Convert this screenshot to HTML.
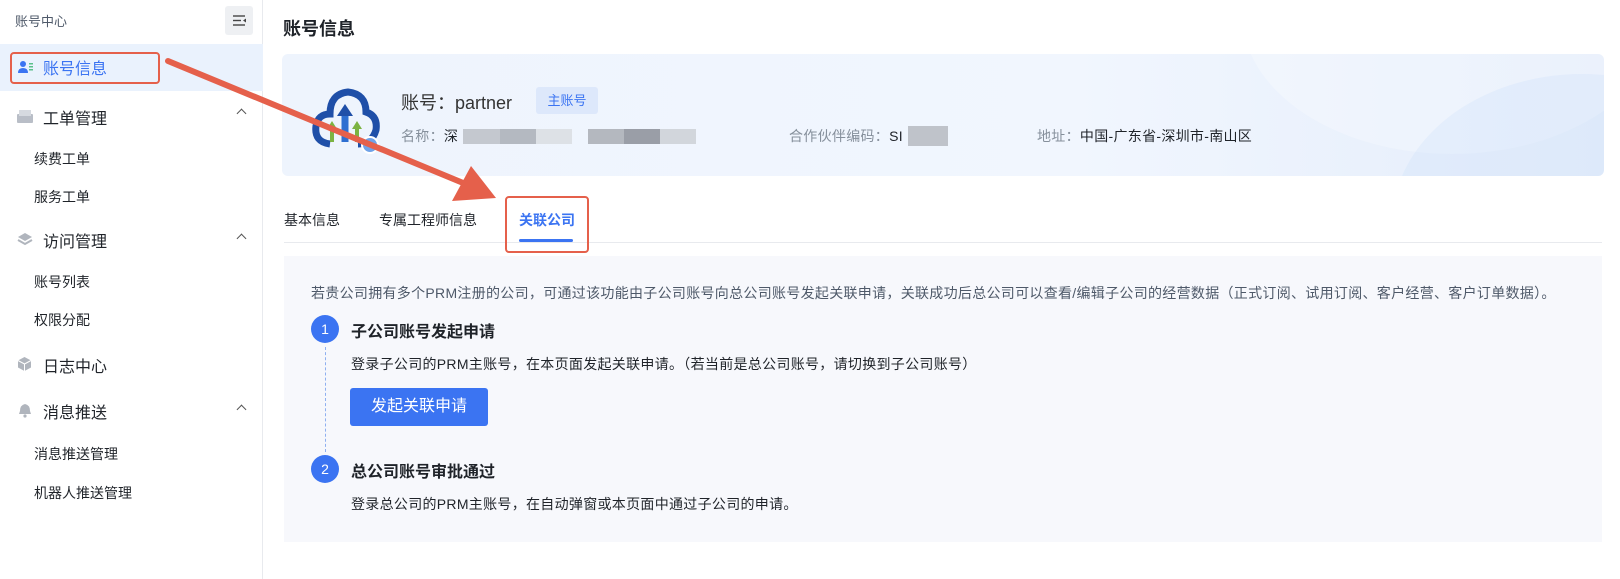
<!DOCTYPE html>
<html><head><meta charset="utf-8"><style>
*{margin:0;padding:0;box-sizing:border-box}
body{width:1620px;height:579px;background:#fff;font-family:"Liberation Sans","Noto Sans CJK SC",sans-serif;color:#1f2329;position:relative;overflow:hidden}
.a{position:absolute;white-space:nowrap}
.side{position:absolute;left:0;top:0;width:263px;height:579px;border-right:1px solid #e8eaee;background:#fff}
.g{font-size:16px;color:#1f2329}
.s{font-size:14px;color:#1f2329}
.ls{letter-spacing:0.3px}
.chev{position:absolute;left:238px;width:7px;height:7px;border-left:1.4px solid #555;border-top:1.4px solid #555;transform:rotate(45deg)}
</style></head><body>
<div class="side">
  <div class="a" style="left:15px;top:11px;font-size:13px;color:#4e5969">账号中心</div>
  <div class="a" style="left:225px;top:6px;width:28px;height:29px;background:#eef0f3;border-radius:3px">
    <svg width="28" height="29" viewBox="0 0 28 29"><g stroke="#444" stroke-width="1.4"><line x1="8" y1="10" x2="20" y2="10"/><line x1="8" y1="14.5" x2="16" y2="14.5"/><line x1="8" y1="19" x2="20" y2="19"/></g><path d="M21 12.5 L18 14.5 L21 16.5Z" fill="#444"/></svg>
  </div>
  <div class="a" style="left:0;top:44px;width:263px;height:47px;background:#eaf2fd"></div>
  <div class="a" style="left:10px;top:52px;width:150px;height:32px;border:2px solid #e5604b;border-radius:4px"></div>
  <svg class="a" style="left:18px;top:60px" width="16" height="14" viewBox="0 0 16 14"><circle cx="5" cy="4" r="3" fill="#3b74f2"/><path d="M0 13 Q0 8 5 8 Q10 8 10 13Z" fill="#3b74f2"/><rect x="11" y="3" width="4" height="1.5" fill="#5bc08a"/><rect x="11" y="6" width="4" height="1.5" fill="#5bc08a"/><rect x="11" y="9" width="4" height="1.5" fill="#5bc08a"/></svg>
  <div class="a g" style="left:43px;top:55px;color:#3b74f2">账号信息</div>
  <svg class="a" style="left:17px;top:109px" width="16" height="14"><rect x="0" y="5" width="16" height="9" rx="1" fill="#b9bec7"/><rect x="2" y="1" width="12" height="6" fill="#d6dae0"/></svg>
  <div class="a g" style="left:43px;top:105px">工单管理</div><div class="chev" style="top:110px"></div>
  <div class="a s" style="left:34px;top:149px">续费工单</div>
  <div class="a s" style="left:34px;top:187px">服务工单</div>
  <svg class="a" style="left:17px;top:232px" width="16" height="15"><path d="M8 1 L15 5 L8 9 L1 5Z" fill="#b0b5bd"/><path d="M1 8 L8 12 L15 8" stroke="#b0b5bd" stroke-width="2" fill="none"/></svg>
  <div class="a g" style="left:43px;top:228px">访问管理</div><div class="chev" style="top:235px"></div>
  <div class="a s" style="left:34px;top:272px">账号列表</div>
  <div class="a s" style="left:34px;top:310px">权限分配</div>
  <svg class="a" style="left:17px;top:356px" width="15" height="16"><path d="M7.5 1 L14 4.5 L14 11.5 L7.5 15 L1 11.5 L1 4.5Z" fill="#b0b5bd"/><path d="M1 4.5 L7.5 8 L14 4.5 M7.5 8 V15" stroke="#fff" stroke-width="1" fill="none"/></svg>
  <div class="a g" style="left:43px;top:353px">日志中心</div>
  <svg class="a" style="left:18px;top:403px" width="14" height="15"><path d="M7 1 Q12 2 12 8 L13 11 L1 11 L2 8 Q2 2 7 1Z" fill="#b0b5bd"/><circle cx="7" cy="13" r="1.6" fill="#b0b5bd"/></svg>
  <div class="a g" style="left:43px;top:399px">消息推送</div><div class="chev" style="top:406px"></div>
  <div class="a s" style="left:34px;top:444px">消息推送管理</div>
  <div class="a s" style="left:34px;top:483px">机器人推送管理</div>
</div>

<div class="a" style="left:283px;top:15px;font-size:18px;font-weight:bold">账号信息</div>
<div class="a" style="left:282px;top:54px;width:1322px;height:122px;border-radius:6px;background:linear-gradient(90deg,#eef4fd,#f1f6fe 60%,#e4edfb);overflow:hidden">
  <div class="a" style="left:960px;top:-180px;width:420px;height:280px;border-radius:50%;background:rgba(255,255,255,.25)"></div>
  <div class="a" style="left:1110px;top:20px;width:380px;height:300px;border-radius:50%;background:rgba(210,225,248,.35)"></div>
</div>
<svg class="a" style="left:310px;top:84px" width="72" height="72" viewBox="0 0 72 72">
  <path d="M20 60 Q4 58 6 42 Q8 30 20 30 Q20 10 38 8 Q56 10 56 28 Q68 32 66 46 Q62 60 48 60" fill="none" stroke="#1f4fa8" stroke-width="7"/>
  <path d="M35 58 V30" stroke="#2e6fd1" stroke-width="7"/><path d="M27 32 L35 20 L43 32Z" fill="#1f4fa8"/>
  <path d="M22 58 V44" stroke="#7cb342" stroke-width="4"/><path d="M17 45 L22 37 L27 45Z" fill="#7cb342"/>
  <path d="M47 58 V44" stroke="#7cb342" stroke-width="4"/><path d="M42 45 L47 37 L52 45Z" fill="#7cb342"/>
  <circle cx="60" cy="61" r="8" fill="#6fa2e8" stroke="#fff" stroke-width="2"/>
</svg>
<div class="a" style="left:401px;top:89px;font-size:18px;color:#333">账号：partner</div>
<div class="a" style="left:536px;top:87px;width:62px;height:27px;background:#dde8fb;border-radius:3px;color:#3b74f2;font-size:13px;line-height:27px;text-align:center">主账号</div>
<div class="a ls" style="left:401px;top:126px;font-size:14px;color:#86909c">名称：<span style="color:#1f2329">深</span></div>
<div class="a" style="left:463px;top:129px;width:37px;height:15px;background:#c4c8cf"></div>
<div class="a" style="left:500px;top:129px;width:36px;height:15px;background:#b4b9c1"></div>
<div class="a" style="left:536px;top:129px;width:36px;height:15px;background:#dde1e6"></div>
<div class="a" style="left:588px;top:129px;width:36px;height:15px;background:#b4b8bf"></div>
<div class="a" style="left:624px;top:129px;width:36px;height:15px;background:#9a9ea7"></div>
<div class="a" style="left:660px;top:129px;width:36px;height:15px;background:#d2d6dc"></div>
<div class="a ls" style="left:789px;top:126px;font-size:14px;color:#86909c">合作伙伴编码：<span style="color:#1f2329">SI</span></div>
<div class="a" style="left:908px;top:126px;width:40px;height:20px;background:#bfc3ca"></div>
<div class="a ls" style="left:1037px;top:126px;font-size:14px;color:#86909c">地址：<span style="color:#1f2329">中国-广东省-深圳市-南山区</span></div>

<div class="a" style="left:284px;top:210px;font-size:14px">基本信息</div>
<div class="a" style="left:379px;top:210px;font-size:14px">专属工程师信息</div>
<div class="a" style="left:519px;top:210px;font-size:14px;color:#3b74f2;font-weight:bold">关联公司</div>
<div class="a" style="left:284px;top:242px;width:1318px;height:1px;background:#e8eaee"></div>
<div class="a" style="left:519px;top:239px;width:54px;height:3px;background:#3b74f2;border-radius:2px"></div>
<div class="a" style="left:505px;top:196px;width:84px;height:57px;border:2px solid #e5604b;border-radius:4px"></div>

<div class="a" style="left:284px;top:256px;width:1318px;height:286px;background:#f7f8fc"></div>
<div class="a ls" style="left:311px;top:283px;font-size:14px;color:#4e5969">若贵公司拥有多个PRM注册的公司，可通过该功能由子公司账号向总公司账号发起关联申请，关联成功后总公司可以查看/编辑子公司的经营数据（正式订阅、试用订阅、客户经营、客户订单数据）。</div>
<div class="a" style="left:311px;top:315px;width:28px;height:28px;border-radius:50%;background:#3b74f2;color:#fff;font-size:14px;line-height:28px;text-align:center">1</div>
<div class="a" style="left:351px;top:318px;font-size:16px;font-weight:bold">子公司账号发起申请</div>
<div class="a" style="left:325px;top:347px;height:105px;border-left:1px dashed #8fb0f0"></div>
<div class="a ls" style="left:351px;top:354px;font-size:14px;color:#1f2329">登录子公司的PRM主账号，在本页面发起关联申请。（若当前是总公司账号，请切换到子公司账号）</div>
<div class="a" style="left:350px;top:388px;width:138px;height:38px;background:#3b74f2;border-radius:3px;color:#fff;font-size:16px;line-height:38px;text-align:center">发起关联申请</div>
<div class="a" style="left:311px;top:455px;width:28px;height:28px;border-radius:50%;background:#3b74f2;color:#fff;font-size:14px;line-height:28px;text-align:center">2</div>
<div class="a" style="left:351px;top:458px;font-size:16px;font-weight:bold">总公司账号审批通过</div>
<div class="a ls" style="left:351px;top:494px;font-size:14px;color:#1f2329">登录总公司的PRM主账号，在自动弹窗或本页面中通过子公司的申请。</div>

<svg class="a" style="left:0;top:0" width="1620" height="579">
  <line x1="168" y1="61" x2="468" y2="185" stroke="#e5604b" stroke-width="6" stroke-linecap="round"/>
  <path d="M496 198 L452 201 L471 166Z" fill="#e5604b"/>
</svg>
</body></html>
